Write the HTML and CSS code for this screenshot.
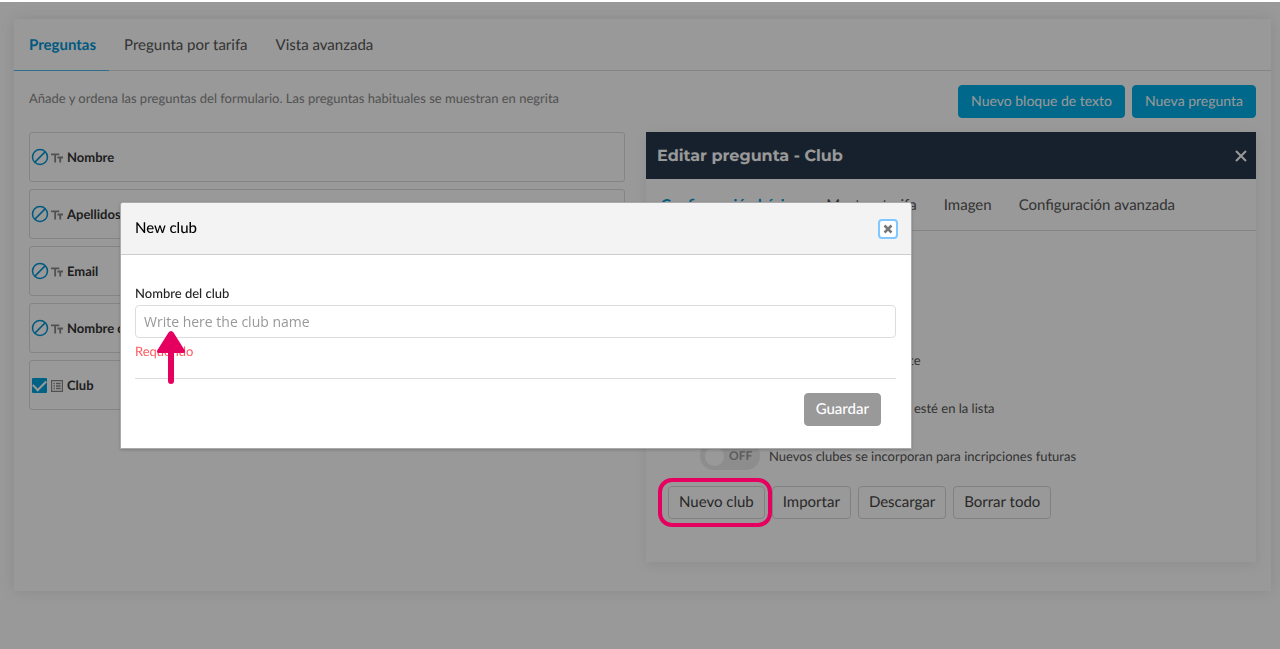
FILE: index.html
```html
<!DOCTYPE html>
<html lang="es">
<head>
<meta charset="utf-8">
<meta name="viewport" content="width=device-width, initial-scale=1">
<title>Preguntas</title>
<link rel="stylesheet" href="styles.css">
</head>
<body>
<svg class="defs" aria-hidden="true">
  <symbol id="ban" viewBox="0 0 18 18"><circle cx="9" cy="9" r="7.5"/><path d="M3.9 14.1 14.1 3.9"/></symbol>
  <symbol id="type" viewBox="0 0 13 12"><path d="M0 1h9v2H5.5v8h-2V3H0zM7 4.500h6v2h-2V11H9V6.500H7z"/></symbol>
  <symbol id="list" viewBox="0 0 12 12"><path fill-rule="evenodd" d="M0 0h12v12H0zM1.200 1.200v9.600h9.600V1.200zM2.500 2.800h1.400v1.400H2.500zM5 2.800h4.600v1.400H5zM2.500 5.300h1.400v1.400H2.500zM5 5.300h4.600v1.400H5zM2.500 7.800h1.400v1.400H2.500zM5 7.800h4.600v1.400H5z"/></symbol>
</svg>
<main class="page">
  <section class="card">
    <nav class="tabs">
      <a class="tab tab-active" href="#preguntas">Preguntas</a>
      <a class="tab" href="#tarifa">Pregunta por tarifa</a>
      <a class="tab" href="#avanzada">Vista avanzada</a>
    </nav>
    <div class="card-body">
      <div class="toolbar">
        <p class="intro">Añade y ordena las preguntas del formulario. Las preguntas habituales se muestran en negrita</p>
        <div class="actions">
          <button class="btn btn-primary" type="button">Nuevo bloque de texto</button>
          <button class="btn btn-primary" type="button">Nueva pregunta</button>
        </div>
      </div>
      <div class="columns">
        <ul class="questions">
          <li class="question"><svg class="ban"><use href="#ban"/></svg><svg class="kind"><use href="#type"/></svg><span>Nombre</span></li>
          <li class="question"><svg class="ban"><use href="#ban"/></svg><svg class="kind"><use href="#type"/></svg><span>Apellidos</span></li>
          <li class="question"><svg class="ban"><use href="#ban"/></svg><svg class="kind"><use href="#type"/></svg><span>Email</span></li>
          <li class="question"><svg class="ban"><use href="#ban"/></svg><svg class="kind"><use href="#type"/></svg><span>Nombre c</span></li>
          <li class="question"><input class="check" type="checkbox" id="q-club" checked><svg class="kind"><use href="#list"/></svg><label for="q-club">Club</label></li>
        </ul>
        <section class="panel">
          <header class="panel-head">
            <h2 class="panel-title">Editar pregunta - Club</h2>
            <button class="panel-close" type="button" aria-label="Cerrar"><svg viewBox="0 0 12 12"><path d="M1 1l10 10M11 1 1 11"/></svg></button>
          </header>
          <nav class="tabs panel-tabs">
            <a class="tab tab-active" href="#basica">Configuración básica</a>
            <a class="tab" href="#mostrar">Mostrar tarifa</a>
            <a class="tab" href="#imagen">Imagen</a>
            <a class="tab" href="#config">Configuración avanzada</a>
          </nav>
          <div class="panel-body">
            <p class="option">te</p>
            <p class="option">esté en la lista</p>
            <label class="switch"><input class="switch-input" type="checkbox" role="switch"><span class="switch-track">OFF</span><span>Nuevos clubes se incorporan para incripciones futuras</span></label>
            <div class="club-actions">
              <span class="highlight"><button class="btn" type="button">Nuevo club</button></span>
              <button class="btn" type="button">Importar</button>
              <button class="btn" type="button">Descargar</button>
              <button class="btn" type="button">Borrar todo</button>
            </div>
          </div>
        </section>
      </div>
    </div>
  </section>
</main>
<div class="overlay"></div>
<div class="modal" role="dialog" aria-labelledby="modal-title">
  <header class="modal-head">
    <h1 class="modal-title" id="modal-title">New club</h1>
    <button class="modal-close" type="button" aria-label="Cerrar"><svg viewBox="0 0 10 10"><path d="M1.500 1.500l7 7M8.500 1.500l-7 7"/></svg></button>
  </header>
  <form class="modal-body">
    <label class="field-label" for="club-name">Nombre del club</label>
    <input class="field" id="club-name" type="text" placeholder="Write here the club name">
    <p class="error">Requerido<svg class="arrow" viewBox="0 0 28 53"><path d="M14 0q1.500 0 2.500 1.500L27.500 19q1.500 3-1.500 3h-9v28a3 3 0 0 1-6 0V22H2q-3 0-1.500-3L11.500 1.500Q12.500 0 14 0z"/></svg></p>
    <div class="modal-foot"><button class="btn btn-save" type="button">Guardar</button></div>
  </form>
</div>
</body>
</html>
```

FILE: styles.css
```css
* { box-sizing: border-box; }
body {
  margin: 0;
  background: #fff;
  font: 15px/20px Lato, "Liberation Sans", sans-serif;
  color: #555;
  text-rendering: geometricPrecision;
}
h1, h2, p, ul { margin: 0; padding: 0; }
.defs { position: absolute; width: 0; height: 0; }
button { cursor: pointer; text-rendering: inherit; }
a { color: inherit; text-decoration: none; }

.page { padding: 19px 9px 58px 14px; }
.card { background: #fff; box-shadow: 0 0 14px rgba(0, 0, 0, 0.1); padding-bottom: 29px; }
.tabs { display: flex; border-bottom: 1px solid #ddd; }
.tab { padding: 16px 13px 15px 15px; margin-bottom: -1px; border-bottom: 1px solid transparent; }
.panel-tabs .tab { padding-right: 12px; }
.tab-active { color: #0095d5; font-weight: 700; }
.tab-active { border-bottom-color: #4db8e8; }
.card-body { padding: 14px 15px 0; }
.toolbar { display: flex; justify-content: space-between; align-items: flex-start; }
.intro { padding-top: 3px; font-size: 13px; color: #888; }
.actions { display: flex; gap: 7px; }
.btn {
  height: 33px;
  padding: 0 10px 2px;
  border: 1px solid #d8d8d8;
  border-radius: 4px;
  background: transparent;
  font: 15px/20px Lato, "Liberation Sans", sans-serif;
  color: #444;
  white-space: nowrap;
}
.btn-primary { padding: 0 12px 1px; background: #00ade6; border-color: #00ade6; font-size: 14px; color: #fff; }

.columns {
  display: grid;
  grid-template-columns: minmax(0, 596fr) minmax(0, 610fr);
  column-gap: 21px;
  align-items: start;
  padding-top: 14px;
}
.questions { display: grid; gap: 7px; list-style: none; }
.question {
  display: flex;
  align-items: center;
  height: 50px;
  padding-left: 1px;
  border: 1px solid #ddd;
  border-radius: 3px;
  font-size: 13px;
  font-weight: 700;
  color: #333;
}
.ban { width: 18px; height: 18px; fill: none; stroke: #0095d5; stroke-width: 1.5; }
.kind { width: 12px; height: 12px; margin: 2px 4px 0 2px; fill: #888; }
.check {
  display: grid;
  place-items: center;
  appearance: none;
  width: 15px;
  height: 15px;
  margin: 0 2px 0 1px;
  border-radius: 1px;
  background: #00a5e0;
}
.check:checked::after {
  content: "";
  width: 11px;
  height: 6px;
  margin-bottom: 3px;
  border: solid #fff;
  border-width: 0 0 2px 2px;
  transform: rotate(-45deg);
}

.panel { background: #fff; box-shadow: 0 3px 12px rgba(0, 0, 0, 0.08); }
.panel-head {
  display: flex;
  align-items: center;
  justify-content: space-between;
  height: 47px;
  padding: 0 9px 0 11px;
  background: #27374c;
}
.panel-title { padding-top: 2px; font: 700 16px/22px Montserrat, Inter, sans-serif; color: #fff; }
.panel-close { display: flex; padding: 0; border: 0; background: none; }
.panel-close svg { width: 12px; height: 12px; stroke: #fff; stroke-width: 2; }
.panel-body { padding: 119px 22px 43px; font-size: 13px; }
.option { padding-bottom: 28px; padding-left: 246px; }
.option + .option { padding-bottom: 24px; }
.option:first-child { padding-left: 241px; }
.switch { display: flex; align-items: center; gap: 9px; padding-left: 32px; }
.switch-input { position: absolute; opacity: 0; }
.switch-track {
  display: flex;
  align-items: center;
  gap: 5px;
  width: 60px;
  height: 28px;
  padding-left: 5px;
  border-radius: 14px;
  background: #ececec;
  font-size: 12px;
  font-weight: 700;
  color: #999;
}
.switch-track::before { content: ""; width: 19px; height: 19px; border-radius: 50%; background: #fff; }
.club-actions { display: flex; gap: 7px; padding-top: 16px; }
.highlight { position: relative; }
.highlight::after {
  content: "";
  position: absolute;
  inset: -8px -7px -8px -10px;
  z-index: 3;
  border: 4px solid #e5005f;
  border-radius: 14px;
  pointer-events: none;
}

.overlay { position: fixed; inset: 2px 0 0; z-index: 1; background: rgba(0, 0, 0, 0.4); }
.modal {
  position: absolute;
  top: 202px;
  left: 120px;
  right: 368px;
  z-index: 2;
  border: 1px solid #aaa;
  border-radius: 3px 3px 0 0;
  background: #fff;
  box-shadow: 0 1px 3px rgba(0, 0, 0, 0.2);
}
.modal-head {
  display: flex;
  align-items: center;
  justify-content: space-between;
  height: 52px;
  padding: 0 13px 0 14px;
  border-bottom: 1px solid #ccc;
  border-radius: 3px 3px 0 0;
  background: #f3f3f3;
}
.modal-title { padding-bottom: 2px; font-size: 15px; line-height: 20px; font-weight: 500; color: #000; }
.modal-close {
  display: grid;
  place-items: center;
  width: 20px;
  height: 20px;
  padding: 0;
  border: 2px solid #80c8ff;
  border-radius: 4px;
  background: #fff;
}
.modal-close svg { width: 10px; height: 10px; stroke: #777; stroke-width: 2.5; }
.modal-body { padding: 28px 15px 22px 14px; }
.field-label { display: block; margin-bottom: 2px; font-size: 13px; font-weight: 500; color: #222; }
.field {
  display: block;
  width: 100%;
  height: 33px;
  padding: 0 8px;
  border: 1px solid #ddd;
  border-radius: 4px;
  font: 14px/20px "Open Sans", sans-serif;
}
.field::placeholder { color: #999; }
.error {
  position: relative;
  padding: 3px 0 17px;
  border-bottom: 1px solid #ddd;
  font-size: 13px;
  color: #ff5a60;
}
.arrow { position: absolute; top: -7px; left: 22px; width: 28px; height: 53px; fill: #e5005f; }
.modal-foot { display: flex; justify-content: flex-end; padding: 14px 15px 0 0; }
.btn-save { padding: 0 11px 2px; background: #999; border-color: #999; color: #fff; font-weight: 500; }
```
